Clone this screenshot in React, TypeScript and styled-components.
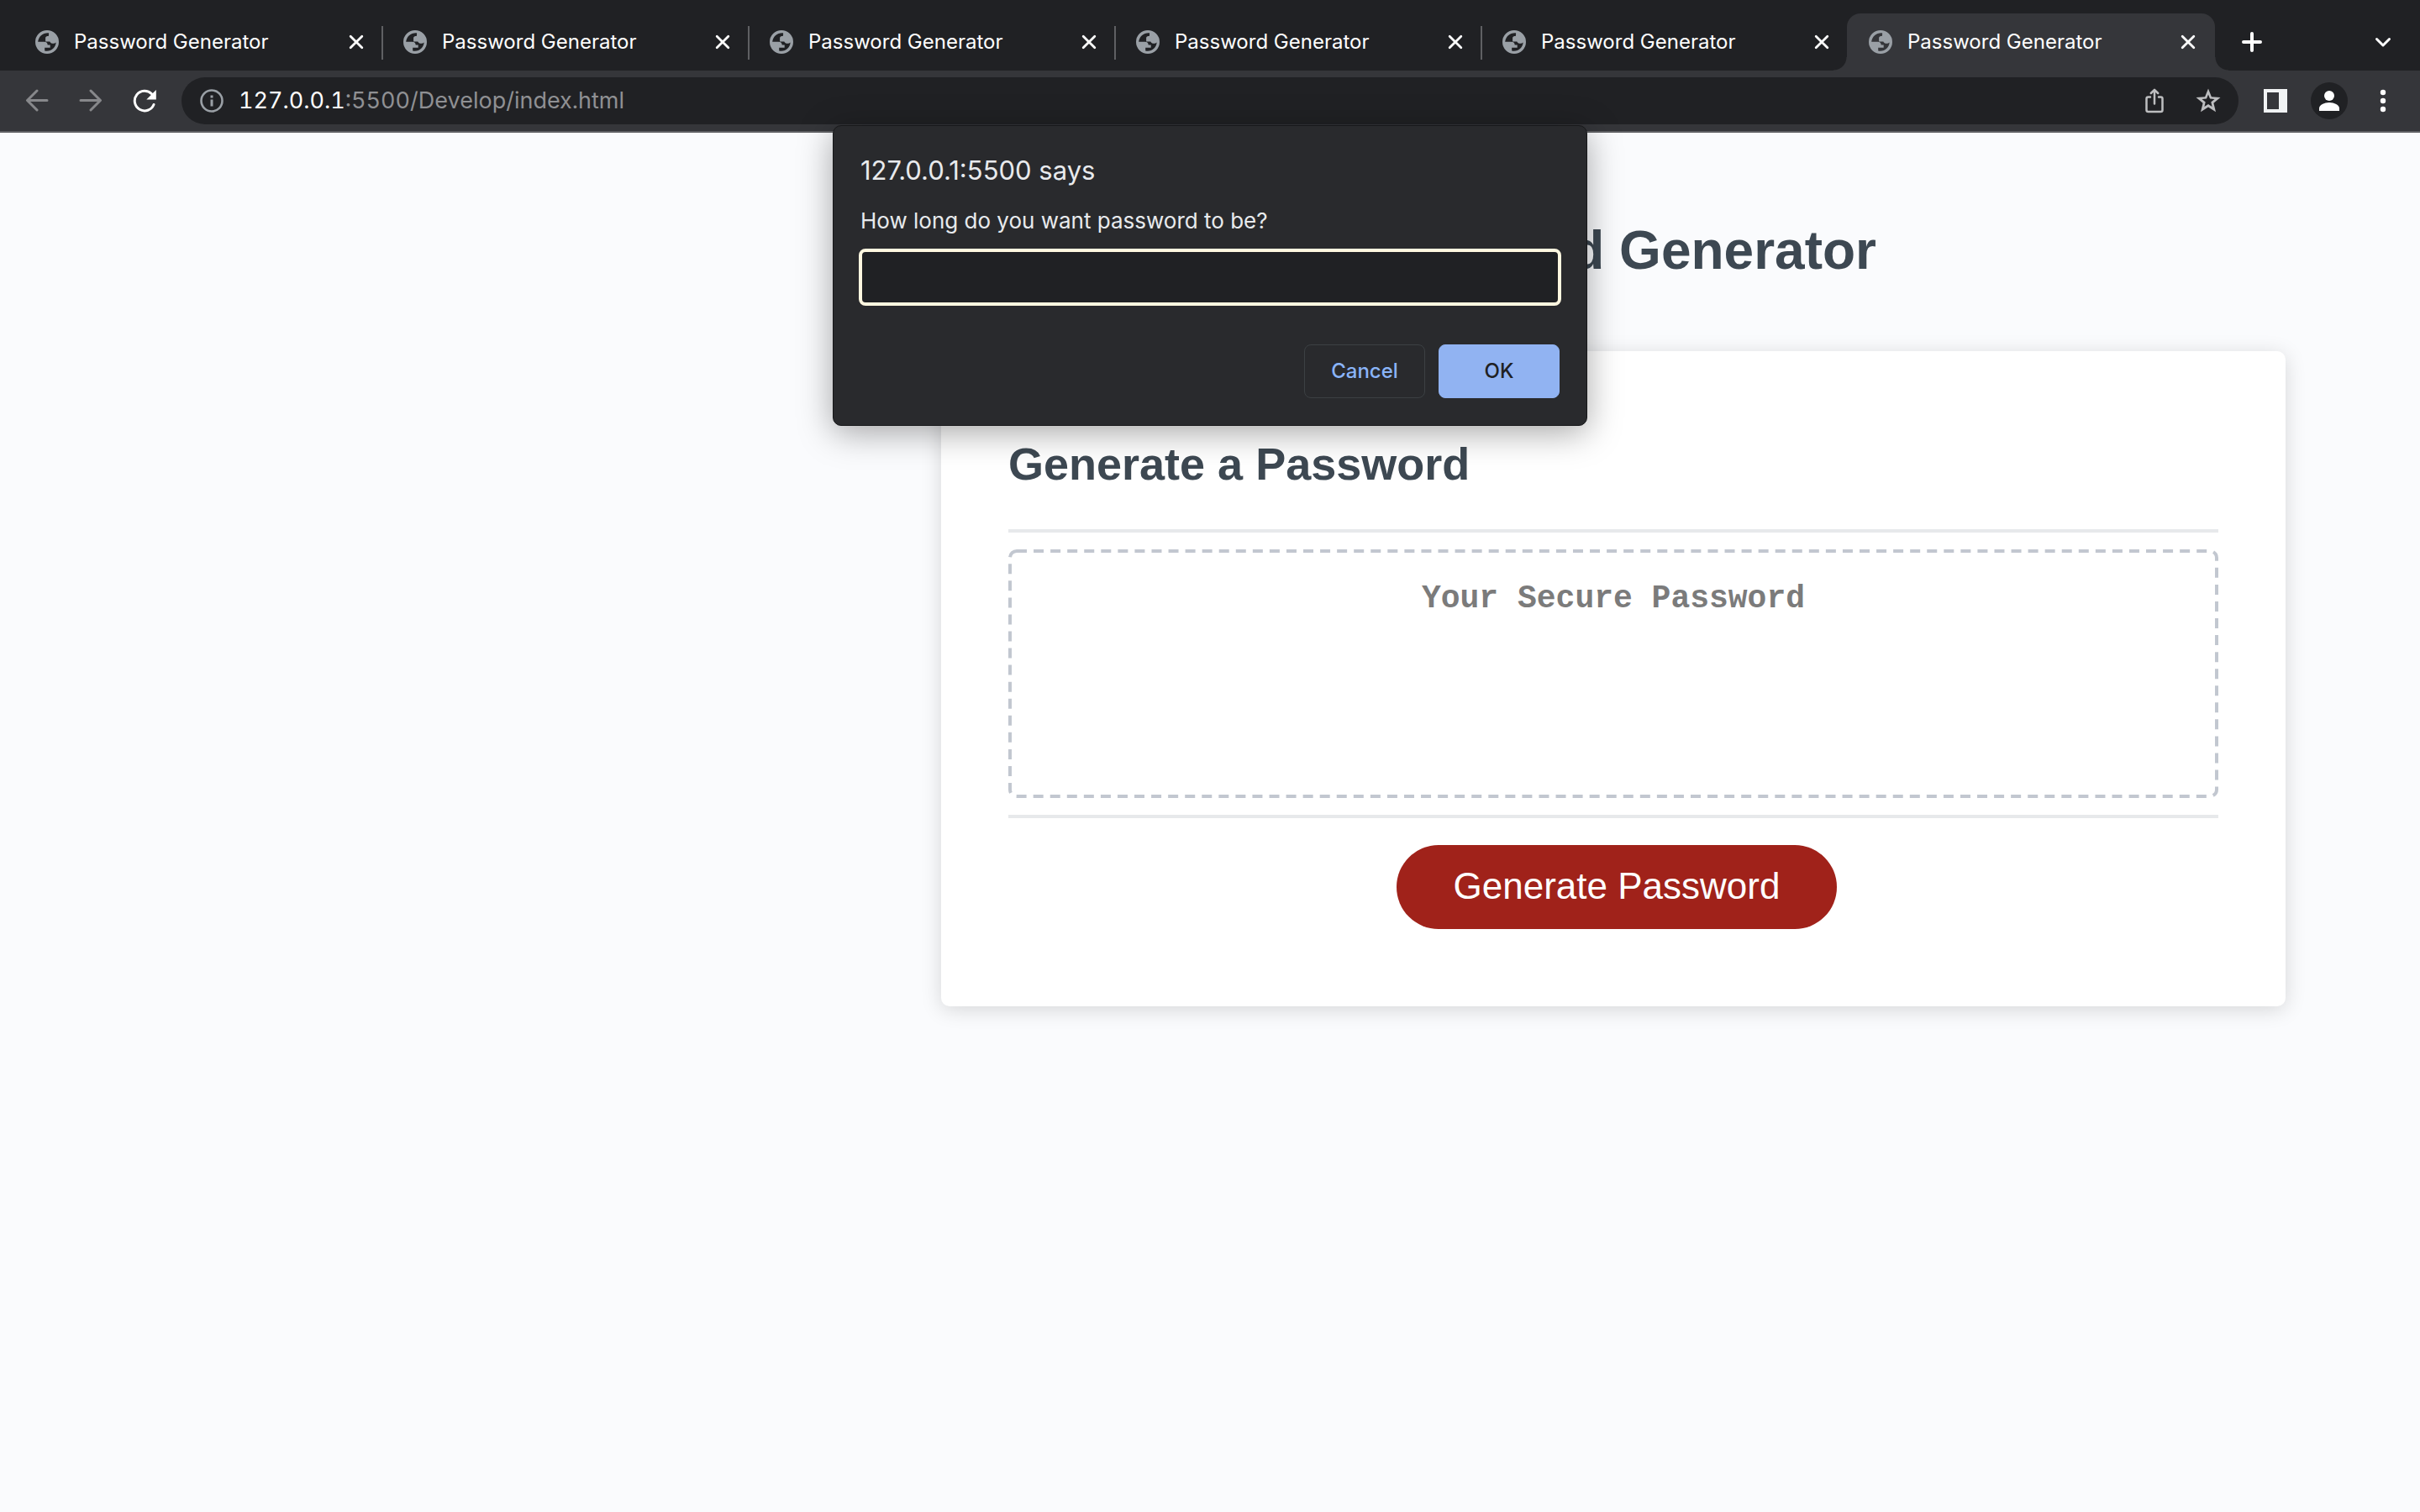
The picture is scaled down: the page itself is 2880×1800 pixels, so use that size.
import React from "react";
import styled, { createGlobalStyle } from "styled-components";

const ui = `Inter, "Liberation Sans", sans-serif`;

const dashedFrame = `url("data:image/svg+xml,%3Csvg xmlns='http://www.w3.org/2000/svg' width='100%25' height='100%25'%3E%3Crect x='2' y='2' rx='8' style='width:calc(100%25 - 4px);height:calc(100%25 - 4px)' fill='none' stroke='%23c2c7d0' stroke-width='4' stroke-dasharray='12 8.06'/%3E%3C/svg%3E")`;

const GlobalStyle = createGlobalStyle`
  *, *::before, *::after { box-sizing: border-box; }
  body { margin: 0; background: #fafbfd; font-family: "Liberation Sans", Arial, sans-serif; }
  h1, h2, p { margin: 0; }
  button, input, textarea { font: inherit; }
`;

const Screen = styled.div`
  position: relative;
  min-height: 100vh;
`;

const IconButton = styled.button<{ $color?: string; $size?: number }>`
  display: grid;
  place-items: center;
  flex: none;
  width: ${(p) => p.$size ?? 40}px;
  height: ${(p) => p.$size ?? 40}px;
  padding: 0;
  border: 0;
  background: none;
  color: ${(p) => p.$color ?? "#ffffff"};
`;

const TabStrip = styled.nav`
  display: flex;
  align-items: flex-end;
  height: 84px;
  padding: 16px 24px 0 18px;
  background: #202124;
`;

const Tab = styled.div<{ $active: boolean; $divided: boolean }>`
  position: relative;
  display: flex;
  align-items: center;
  flex: 0 1 436px;
  height: 68px;
  padding: 0 12px 0 24px;
  color: #ffffff;
  &:first-child { flex-basis: 438px; }
  ${(p) =>
    p.$divided &&
    `&::after {
      content: "";
      position: absolute;
      right: 0;
      top: 15px;
      width: 2px;
      height: 40px;
      background: #5f6063;
    }`}
  ${(p) =>
    p.$active &&
    `flex-basis: 438px;
    margin-left: -2px;
    padding-left: 26px;
    background: #35363a;
    border-radius: 16px 16px 0 0;
    &::before, &::after {
      content: "";
      position: absolute;
      bottom: 0;
      width: 16px;
      height: 16px;
    }
    &::before { left: -16px; background: radial-gradient(circle at 0 0, #202124 15px, #35363a 16px); }
    &::after { right: -16px; background: radial-gradient(circle at 100% 0, #202124 15px, #35363a 16px); }`}
`;

const TabTitle = styled.span`
  flex: 1;
  padding-left: 18px;
  font: 400 24px/32px ${ui};
  white-space: nowrap;
`;

const NewTab = styled(IconButton)`
  align-self: center;
  margin: 0 auto 0 24px;
`;

const TabMenu = styled(IconButton)`
  align-self: center;
`;

const Toolbar = styled.div`
  display: flex;
  align-items: center;
  gap: 24px;
  height: 74px;
  padding: 0 24px;
  background: #35363a;
  border-bottom: 2px solid #5f6063;
`;

const AddressBar = styled.div`
  display: flex;
  align-items: center;
  flex: 1;
  height: 56px;
  padding: 0 16px;
  border-radius: 28px;
  background: #202124;
`;

const Address = styled.p`
  flex: 1;
  padding-left: 12px;
  font: 400 27px/40px ${ui};
  font-variant-numeric: tabular-nums;
  color: #8f9093;
`;

const Host = styled.span`
  color: #ffffff;
`;

const AddressActions = styled.div`
  display: flex;
  gap: 24px;
`;

const Avatar = styled(IconButton)`
  margin: 0 -2px;
  border-radius: 50%;
  background: #202124;
`;

const Page = styled.main`
  margin-left: 33.3333%;
  padding: 100px 160px;
`;

const PageTitle = styled.h1`
  font-size: 64px;
  line-height: 80px;
  text-align: center;
  color: #3d4852;
`;

const Card = styled.section`
  margin-top: 80px;
  padding: 98px 80px 92px;
  border-radius: 10px;
  background: #ffffff;
  box-shadow: 0 4px 24px rgba(0, 0, 0, 0.15);
`;

const CardTitle = styled.h2`
  padding-bottom: 42px;
  border-bottom: 4px solid #e7e9eb;
  font-size: 54px;
  line-height: 72px;
  color: #3d4852;
`;

const Output = styled.textarea`
  display: block;
  width: 100%;
  height: 296px;
  margin: 20px 0;
  padding: 35px 32px;
  border: 0;
  background: ${dashedFrame} no-repeat 0 0 / 100% 100%;
  resize: none;
  overflow: hidden;
  text-align: center;
  font: 700 38px/48px "Liberation Mono", "Courier New", monospace;
  &::placeholder { color: #7b7b7b; opacity: 1; }
`;

const CardFooter = styled.footer`
  display: flex;
  justify-content: center;
  padding: 32px 0 0 8px;
  border-top: 4px solid #e7e9eb;
`;

const GenerateButton = styled.button`
  height: 100px;
  padding: 0 68px 2px;
  border: 0;
  border-radius: 50px;
  background: #a0221a;
  color: #ffffff;
  font-size: 44px;
  line-height: 52px;
`;

const Prompt = styled.form`
  position: absolute;
  top: 149px;
  left: 50%;
  transform: translateX(-50%);
  width: 898px;
  padding: 33px 32px 32px;
  border: 1px solid #17181a;
  border-radius: 10px;
  background: #292a2d;
  color: #e8eaed;
  box-shadow: 0 8px 40px rgba(0, 0, 0, 0.35);
  font-family: ${ui};
`;

const PromptTitle = styled.h2`
  font-weight: 400;
  font-size: 31px;
  line-height: 40px;
`;

const PromptLabel = styled.label`
  display: block;
  margin-top: 22px;
  font-size: 26px;
  line-height: 36px;
`;

const PromptInput = styled.input`
  display: block;
  width: calc(100% + 4px);
  height: 68px;
  margin: 15px -2px 46px;
  padding: 0 12px;
  border: 4px solid #fef7e0;
  border-radius: 8px;
  outline: 0;
  background: #202124;
  color: #e8eaed;
  font-size: 26px;
`;

const PromptActions = styled.div`
  display: flex;
  justify-content: flex-end;
  gap: 16px;
`;

const PromptButton = styled.button<{ $primary?: boolean }>`
  width: 144px;
  height: 64px;
  padding: 0;
  border: 1px solid ${(p) => (p.$primary ? "#91b3f2" : "#3c4043")};
  border-radius: 8px;
  background: ${(p) => (p.$primary ? "#91b3f2" : "transparent")};
  color: ${(p) => (p.$primary ? "#202124" : "#8ab4f8")};
  font-weight: 500;
  font-size: 24px;
  line-height: 32px;
`;

const Globe = () => (
  <svg width="28" height="28" viewBox="0 0 28 28" aria-hidden="true">
    <path
      fill="#9aa0a6"
      fillRule="evenodd"
      d="M14 0a14 14 0 1 1 0 28a14 14 0 0 1 0-28zM15.800 3.200C9 2.800 3.800 7.500 3.200 13.800h7.300c2.800 0 4.200 1.400 4.200 3.700h3v3.300h-6.500v3.600c6.900 1.500 13.100-3.200 13.400-10-1.800 1.900-6.300 1.900-7.300-1h-5.200V9.300c0-1.700 1.300-2.200 3.700-2.200 0-1.800.8-2.800 0-3.900z"
    />
  </svg>
);

const Close = () => (
  <svg width="20" height="20" viewBox="0 0 20 20" aria-hidden="true" fill="none" stroke="currentColor" strokeWidth="2.800" strokeLinecap="round">
    <path d="M3.200 3.200l13.600 13.600M16.800 3.200L3.200 16.800" />
  </svg>
);

const Arrow = ({ forward = false }: { forward?: boolean }) => (
  <svg width="28" height="28" viewBox="0 0 28 28" aria-hidden="true" fill="none" stroke="currentColor" strokeWidth="3" strokeLinecap="round" strokeLinejoin="round">
    <path d={forward ? "M2 13.500h23M14 2l11.500 11.500L14 25" : "M26 13.500H3M14 2L2.500 13.500 14 25"} />
  </svg>
);

const tabs = Array.from({ length: 6 }, (_, i) => ({ id: i, title: "Password Generator" }));
const activeTab = 5;

export default function App() {
  return (
    <Screen>
      <GlobalStyle />
      <TabStrip aria-label="Tabs">
        {tabs.map((tab) => (
          <Tab key={tab.id} $active={tab.id === activeTab} $divided={tab.id < activeTab - 1}>
            <Globe />
            <TabTitle>{tab.title}</TabTitle>
            <IconButton aria-label="Close tab"><Close /></IconButton>
          </Tab>
        ))}
        <NewTab aria-label="New tab">
          <svg width="24" height="24" viewBox="0 0 24 24" fill="none" stroke="currentColor" strokeWidth="4" strokeLinecap="round"><path d="M12 2v20M2 12h20" /></svg>
        </NewTab>
        <TabMenu aria-label="Search tabs">
          <svg width="20" height="20" viewBox="0 0 20 20" fill="none" stroke="currentColor" strokeWidth="3" strokeLinecap="round" strokeLinejoin="round"><path d="M2.500 6.500L10 14l7.500-7.500" /></svg>
        </TabMenu>
      </TabStrip>
      <Toolbar>
        <IconButton aria-label="Back" $color="#87888b"><Arrow /></IconButton>
        <IconButton aria-label="Forward" $color="#87888b"><Arrow forward /></IconButton>
        <IconButton aria-label="Reload">
          <svg width="28" height="28" viewBox="0 0 28 28"><path d="M25 18.500A11.800 11.800 0 1 1 22.500 5.800" fill="none" stroke="currentColor" strokeWidth="3" strokeLinecap="round" /><path d="M27.800 1v11.500H16.300z" fill="currentColor" /></svg>
        </IconButton>
        <AddressBar>
          <IconButton aria-label="Site information" $color="#9aa0a6">
            <svg width="28" height="28" viewBox="0 0 28 28"><circle cx="14" cy="14" r="12.500" fill="none" stroke="currentColor" strokeWidth="2.600" /><path d="M12.500 7.500h3v3h-3zM12.500 12.500h3v8h-3z" fill="currentColor" /></svg>
          </IconButton>
          <Address><Host>127.0.0.1</Host>:5500/Develop/index.html</Address>
          <AddressActions>
            <IconButton aria-label="Share" $color="#bdbec0">
              <svg width="24" height="30" viewBox="0 0 24 30" fill="none" stroke="currentColor" strokeWidth="2.500" strokeLinecap="round" strokeLinejoin="round"><path d="M7 10.500H4.500a2 2 0 0 0-2 2V26a2 2 0 0 0 2 2h15a2 2 0 0 0 2-2V12.500a2 2 0 0 0-2-2H17M12 18.500V2M7.800 6L12 1.800 16.200 6" /></svg>
            </IconButton>
            <IconButton aria-label="Bookmark" $color="#bdbec0">
              <svg width="30" height="30" viewBox="0 0 30 30" fill="currentColor"><path fillRule="evenodd" d="M15 .5l3.900 9.700 10.600.8-8.100 6.800 2.600 10.400-9-5.600-9 5.600 2.600-10.400L.5 11l10.600-.8zM15 7.600l-2 5-5.500.5 4.200 3.500-1.300 5.300 4.600-2.900 4.600 2.900-1.300-5.300 4.200-3.500-5.500-.5z" /></svg>
            </IconButton>
          </AddressActions>
        </AddressBar>
        <IconButton aria-label="Side panel" $color="#f1f3f4">
          <svg width="28" height="28" viewBox="0 0 28 28"><path fillRule="evenodd" d="M0 0h28v28H0zM4 4v20h14V4z" fill="currentColor" /></svg>
        </IconButton>
        <Avatar aria-label="Profile" $size={44}>
          <svg width="24" height="24" viewBox="0 0 24 24" fill="currentColor"><circle cx="12" cy="6" r="6" /><path d="M0 24v-3c0-4 6-7 12-7s12 3 12 7v3z" /></svg>
        </Avatar>
        <IconButton aria-label="More">
          <svg width="8" height="28" viewBox="0 0 8 28" fill="currentColor"><circle cx="4" cy="4" r="3.200" /><circle cx="4" cy="14" r="3.200" /><circle cx="4" cy="24" r="3.200" /></svg>
        </IconButton>
      </Toolbar>
      <Page>
        <PageTitle>Password Generator</PageTitle>
        <Card>
          <CardTitle>Generate a Password</CardTitle>
          <Output readOnly placeholder="Your Secure Password" aria-label="Your Secure Password" />
          <CardFooter>
            <GenerateButton type="button">Generate Password</GenerateButton>
          </CardFooter>
        </Card>
      </Page>
      <Prompt role="dialog" aria-labelledby="prompt-title" onSubmit={(e) => e.preventDefault()}>
        <PromptTitle id="prompt-title">127.0.0.1:5500 says</PromptTitle>
        <PromptLabel htmlFor="length">How long do you want password to be?</PromptLabel>
        <PromptInput id="length" type="text" />
        <PromptActions>
          <PromptButton type="button">Cancel</PromptButton>
          <PromptButton type="submit" $primary>OK</PromptButton>
        </PromptActions>
      </Prompt>
    </Screen>
  );
}
